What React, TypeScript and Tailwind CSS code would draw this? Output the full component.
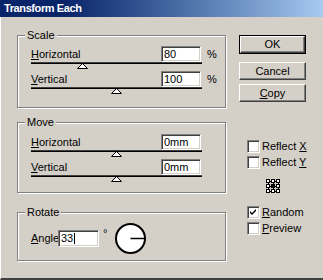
import type { ReactNode } from "react";

const sunken =
  "bg-white border border-t-[#808080] border-l-[#808080] border-r-white border-b-white shadow-[inset_1px_1px_0_#404040,inset_-1px_-1px_0_#d4d0c8]";

const raised =
  "border border-t-white border-l-white border-r-[#404040] border-b-[#404040] shadow-[inset_-1px_-1px_0_#808080,inset_1px_1px_0_#d4d0c8]";

function GroupBox({
  label,
  className,
  children,
}: {
  label: string;
  className: string;
  children: ReactNode;
}) {
  return (
    <div
      className={`relative border border-[#808080] shadow-[1px_1px_0_#fff,inset_1px_1px_0_#fff] ${className}`}
    >
      <span className="absolute -top-[7px] left-[7px] bg-[#d4d0c8] px-[2px] leading-[13px]">
        {label}
      </span>
      {children}
    </div>
  );
}

function Field({ value, className = "" }: { value: string; className?: string }) {
  return (
    <div className={`${sunken} flex items-center pl-[2px] leading-none ${className}`}>
      {value}
    </div>
  );
}

function Slider({ thumb }: { thumb: string }) {
  return (
    <div className="relative mr-[20px] h-[8px]">
      <div className="h-[2px] border-t border-[#404040] bg-black" />
      <svg
        className={`absolute top-[1px] ${thumb}`}
        width="11"
        height="6"
        viewBox="0 0 11 6"
      >
        <path d="M5.5 0.5 L10.5 5.5 L0.5 5.5 Z" fill="#fff" stroke="#000" strokeWidth="1" />
      </svg>
    </div>
  );
}

function ValueRow({
  label,
  hotkey,
  value,
  unit,
  className = "",
}: {
  label: string;
  hotkey: string;
  value: string;
  unit?: string;
  className?: string;
}) {
  return (
    <div className={`flex h-[16px] items-center ${className}`}>
      <span className="flex-1">
        <span className="underline underline-offset-1">{hotkey}</span>
        {label}
      </span>
      <Field value={value} className="h-[16px] w-[40px]" />
      <span className="w-[21px] pl-[6px]">{unit}</span>
    </div>
  );
}

function Button({
  children,
  isDefault,
  className = "",
}: {
  children: ReactNode;
  isDefault?: boolean;
  className?: string;
}) {
  if (isDefault) {
    return (
      <div className={`h-[19px] border border-black ${className}`}>
        <div className={`${raised} flex h-full items-center justify-center`}>{children}</div>
      </div>
    );
  }
  return (
    <div className={`${raised} flex h-[18px] items-center justify-center ${className}`}>
      {children}
    </div>
  );
}

function Check({
  hotkeyFirst,
  rest,
  hotkeyLast,
  checked,
  className = "",
}: {
  hotkeyFirst?: string;
  rest: string;
  hotkeyLast?: string;
  checked?: boolean;
  className?: string;
}) {
  return (
    <div className={`flex items-center gap-[2px] whitespace-nowrap ${className}`}>
      <div className={`${sunken} flex h-[13px] w-[13px] shrink-0 items-center justify-center`}>
        {checked && (
          <svg width="7" height="7" viewBox="0 0 7 7">
            <path d="M0 2 L2 4 L6 0 L6 2 L2 6 L0 4 Z" fill="#000" />
          </svg>
        )}
      </div>
      <span className="leading-[13px]">
        {hotkeyFirst && <span className="underline underline-offset-1">{hotkeyFirst}</span>}
        {rest}
        {hotkeyLast && <span className="underline underline-offset-1">{hotkeyLast}</span>}
      </span>
    </div>
  );
}

function ReferencePoint() {
  const pos = [0, 5, 10];
  return (
    <svg
      width="14"
      height="14"
      viewBox="0 0 14 14"
      className="ml-[19px] mt-[10px]"
      shapeRendering="crispEdges"
    >
      <path d="M2 2 H12 M2 7 H12 M2 12 H12 M2 2 V12 M7 2 V12 M12 2 V12" stroke="#000" strokeWidth="1" />
      {pos.map((y) =>
        pos.map((x) => (
          <rect
            key={`${x}-${y}`}
            x={x + 0.5}
            y={y + 0.5}
            width="3"
            height="3"
            fill={x === 5 && y === 5 ? "#000" : "#fff"}
            stroke="#000"
          />
        ))
      )}
    </svg>
  );
}

export default function App() {
  return (
    <div className="flex h-[280px] w-[323px] flex-col overflow-hidden bg-[#d4d0c8] font-['Liberation_Sans',Arial,sans-serif] text-[11px] text-black">
      {/* Title bar */}
      <div className="flex h-[17px] items-center bg-gradient-to-r from-[#0a246a] from-20% to-[#a6caf0] pl-[4px]">
        <span className="text-[11px] font-bold tracking-[-0.4px] text-white">Transform Each</span>
      </div>

      {/* Body */}
      <div className="flex flex-1 border-b-2 border-l border-b-[#404040] border-l-white pl-[16px] pt-[18px]">
        {/* Left column */}
        <div className="w-[209px]">
          <GroupBox label="Scale" className="h-[73px] pl-[13px] pr-[3px] pt-[10px]">
            <ValueRow hotkey="H" label="orizontal" value="80" unit="%" />
            <Slider thumb="left-[46px]" />
            <ValueRow hotkey="V" label="ertical" value="100" unit="%" className="mt-[1px]" />
            <Slider thumb="left-[80px]" />
          </GroupBox>

          <GroupBox label="Move" className="mt-[14px] h-[71px] pl-[13px] pr-[3px] pt-[11px]">
            <ValueRow hotkey="H" label="orizontal" value="0mm" />
            <Slider thumb="left-[80px]" />
            <ValueRow hotkey="V" label="ertical" value="0mm" className="mt-[1px]" />
            <Slider thumb="left-[80px]" />
          </GroupBox>

          <GroupBox label="Rotate" className="mt-[19px] h-[49px] pl-[13px] pt-[10px]">
            <div className="flex h-[30px] items-center">
              <span className="w-[27px]">
                <span className="underline underline-offset-1">A</span>ngle
              </span>
              <div className={`${sunken} flex h-[17px] w-[41px] items-center pl-[2px] leading-none`}>
                33
                <span className="ml-px h-[11px] w-px bg-black" />
              </div>
              <span className="w-[16px] self-start pl-[4px] pt-[5px] leading-none">°</span>
              <svg width="31" height="31" viewBox="0 0 31 31">
                <circle cx="15.5" cy="15.5" r="14.5" fill="#fff" stroke="#000" strokeWidth="2" />
                <path d="M15.5 15.5 H29" stroke="#000" strokeWidth="1.5" />
              </svg>
            </div>
          </GroupBox>
        </div>

        {/* Right column */}
        <div className="ml-[13px] w-[67px]">
          <Button isDefault>OK</Button>
          <Button className="mt-[8px]">Cancel</Button>
          <Button className="mt-[4px]">
            <span>
              <span className="underline underline-offset-1">C</span>opy
            </span>
          </Button>

          <div className="ml-[8px]">
            <Check rest="Reflect " hotkeyLast="X" className="mt-[38px]" />
            <Check rest="Reflect " hotkeyLast="Y" className="mt-[3px]" />
            <ReferencePoint />
            <Check hotkeyFirst="R" rest="andom" checked className="mt-[13px]" />
            <Check hotkeyFirst="P" rest="review" className="mt-[3px]" />
          </div>
        </div>
      </div>
    </div>
  );
}
